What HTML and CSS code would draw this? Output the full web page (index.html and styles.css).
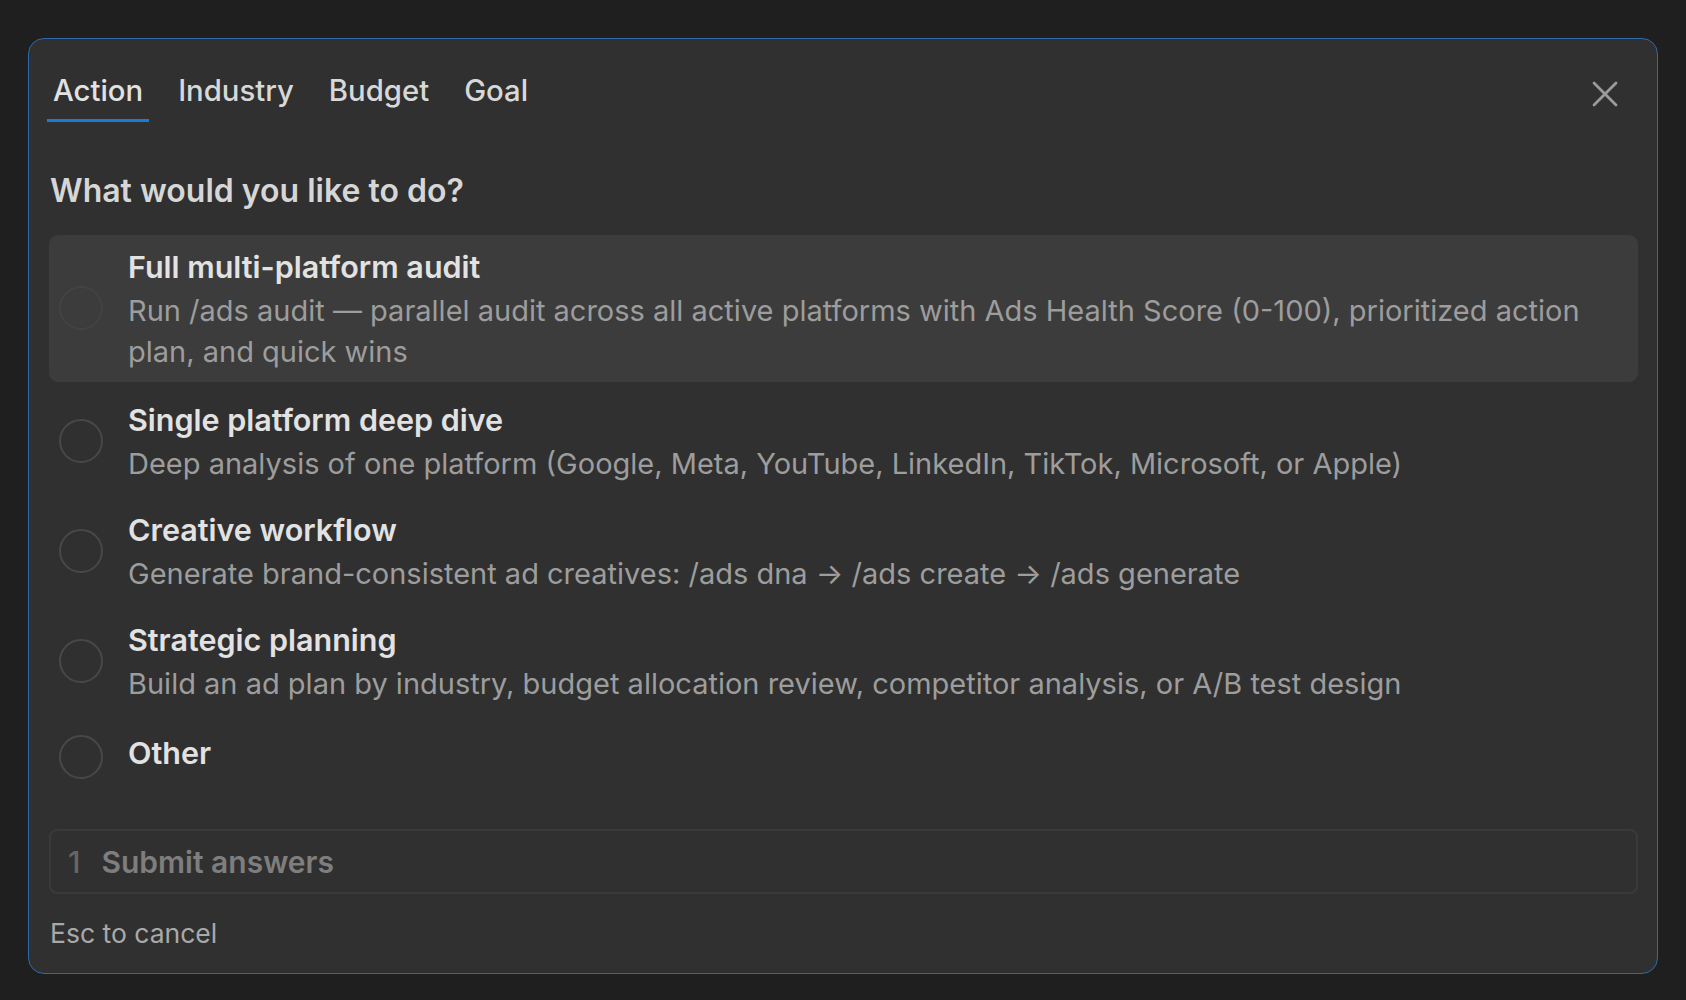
FILE: index.html
```html
<!DOCTYPE html>
<html lang="en">
<head>
  <meta charset="UTF-8">
  <meta name="viewport" content="width=device-width, initial-scale=1.0">
  <title>Questions</title>
  <link rel="stylesheet" href="styles.css">
</head>
<body>
  <!-- Dialog -->
  <div class="dialog">
    <!-- Tabs -->
    <div class="tabs-row">
      <div class="tabs">
        <a href="#" class="tab active">Action</a>
        <a href="#" class="tab">Industry</a>
        <a href="#" class="tab">Budget</a>
        <a href="#" class="tab">Goal</a>
      </div>
      <button type="button" class="close" aria-label="Close">
        <svg width="26" height="26" viewBox="0 0 26 26">
          <path d="M2 2 L24 24 M24 2 L2 24" stroke="#9b9b9b" stroke-width="2.8" stroke-linecap="round" fill="none"/>
        </svg>
      </button>
    </div>

    <h2 class="question">What would you like to do?</h2>

    <!-- Options -->
    <div class="options">
      <div class="option selected">
        <span class="radio"></span>
        <div class="option-text">
          <div class="option-title">Full multi-platform audit</div>
          <div class="option-desc">Run /ads audit — parallel audit across all active platforms with Ads Health Score (0-100), prioritized action plan, and quick wins</div>
        </div>
      </div>
      <div class="option">
        <span class="radio"></span>
        <div class="option-text">
          <div class="option-title">Single platform deep dive</div>
          <div class="option-desc">Deep analysis of one platform (Google, Meta, YouTube, LinkedIn, TikTok, Microsoft, or Apple)</div>
        </div>
      </div>
      <div class="option">
        <span class="radio"></span>
        <div class="option-text">
          <div class="option-title">Creative workflow</div>
          <div class="option-desc">Generate brand-consistent ad creatives: /ads dna → /ads create → /ads generate</div>
        </div>
      </div>
      <div class="option">
        <span class="radio"></span>
        <div class="option-text">
          <div class="option-title">Strategic planning</div>
          <div class="option-desc">Build an ad plan by industry, budget allocation review, competitor analysis, or A/B test design</div>
        </div>
      </div>
      <div class="option other">
        <span class="radio"></span>
        <div class="option-text">
          <div class="option-title">Other</div>
        </div>
      </div>
    </div>

    <!-- Enviar -->
    <div class="submit">
      <span class="submit-num">1</span>
      <span class="submit-label">Submit answers</span>
    </div>

    <div class="hint">Esc to cancel</div>
  </div>
</body>
</html>
```

FILE: styles.css
```css
/* General */
body {
  font-family: Inter, "Noto Sans", Arial, sans-serif;
  margin: 0;
  padding: 38px 28px 27px 28px;
  background-color: #1f1f1f;
  color: #dedede;
}
a {
  text-decoration: none;
  color: inherit;
}
/* Dialog */
.dialog {
  background-color: #303030;
  border: 1.5px solid #2d6aab;
  border-radius: 16px;
  padding: 0 19px 0 20px;
  height: 936px;
  box-sizing: border-box;
}
/* Tabs */
.tabs-row {
  display: flex;
  justify-content: space-between;
  align-items: center;
  padding-top: 33px;
}
.tabs {
  display: flex;
  gap: 23px;
  margin-left: -2px;
}
.tab {
  font-size: 29.3px;
  font-weight: 500;
  color: #d8d8d8;
  padding: 0 6px 9px;
  line-height: 38px;
  border-bottom: 3.5px solid transparent;
}
.tab.active {
  color: #e2e2e2;
  border-bottom-color: #1b7bd2;
}
.close {
  background: none;
  border: none;
  padding: 0;
  margin-right: 20px;
  margin-top: -7px;
  cursor: pointer;
  display: flex;
}
/* Pregunta */
.question {
  font-size: 32px;
  font-weight: 600;
  color: #d6d6d6;
  margin: 49px 0 24px 1px;
  line-height: 40px;
}
/* Opciones */
.options {
  display: flex;
  flex-direction: column;
  gap: 6px;
}
.option {
  display: flex;
  align-items: center;
  gap: 25px;
  padding: 9px 10px 8px;
  border-radius: 9px;
}
.option.selected {
  background-color: #3c3c3c;
  padding-bottom: 10px;
}
.option.other {
  align-items: flex-start;
  padding: 12px 10px 16px;
}
.option.other .radio {
  margin-top: 5px;
}
.radio {
  width: 40px;
  height: 40px;
  border: 2px solid #484848;
  border-radius: 50%;
  flex-shrink: 0;
}
.option.selected .radio {
  border-color: #434343;
}
.option-title {
  font-size: 30.5px;
  font-weight: 600;
  color: #e2e2e2;
  line-height: 46px;
}
.option-desc {
  font-size: 29px;
  color: #9d9d9d;
  line-height: 41px;
}
/* Enviar */
.submit {
  margin-top: 34px;
  height: 65px;
  box-sizing: border-box;
  border: 2px solid #3a3a3a;
  border-radius: 8px;
  display: flex;
  align-items: center;
  gap: 21px;
  padding-left: 17px;
  font-size: 30px;
  font-weight: 600;
}
.submit-num {
  color: #666666;
  font-weight: 500;
}
.submit-label {
  color: #7e7e7e;
}
.hint {
  margin-top: 23px;
  font-size: 26.5px;
  color: #a9a9a9;
  padding-left: 1px;
}
```
